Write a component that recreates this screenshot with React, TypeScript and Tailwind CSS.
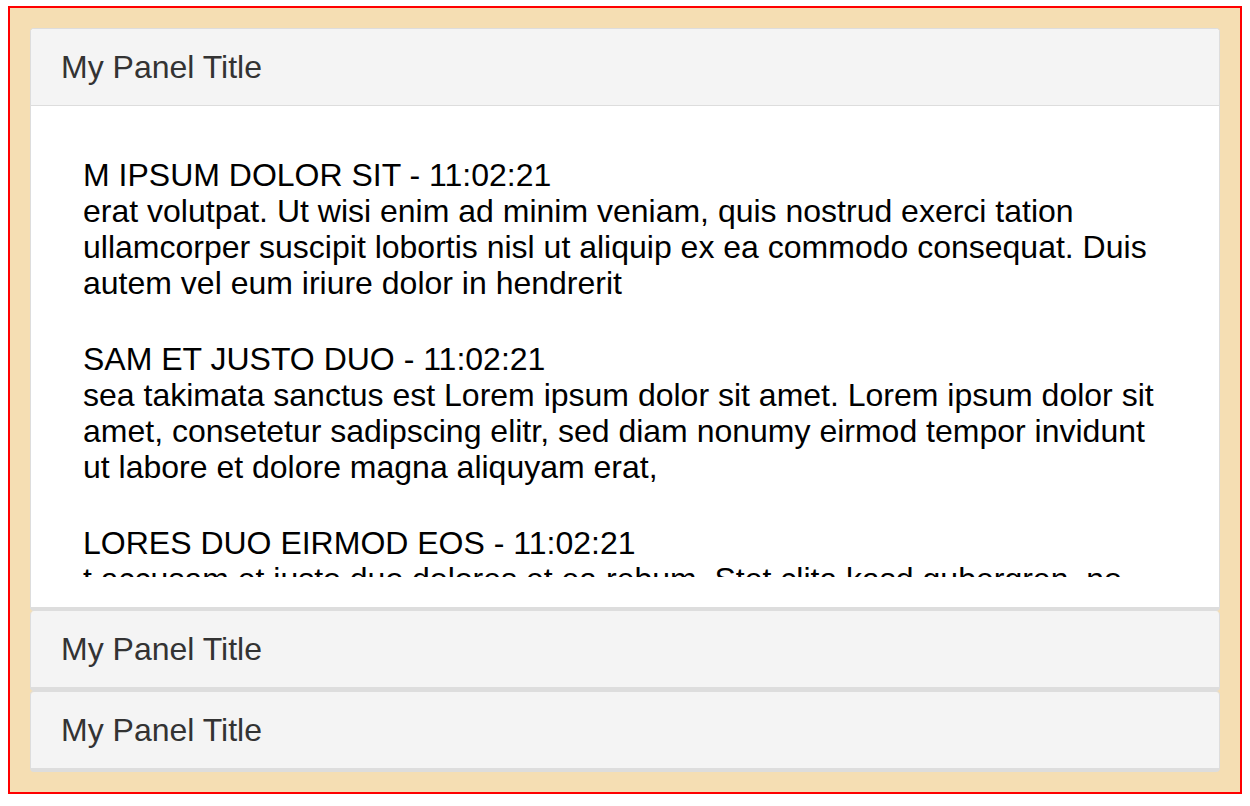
const entries = [
  {
    title: 'M IPSUM DOLOR SIT - 11:02:21',
    text: 'erat volutpat. Ut wisi enim ad minim veniam, quis nostrud exerci tation ullamcorper suscipit lobortis nisl ut aliquip ex ea commodo consequat. Duis autem vel eum iriure dolor in hendrerit',
  },
  {
    title: 'SAM ET JUSTO DUO - 11:02:21',
    text: 'sea takimata sanctus est Lorem ipsum dolor sit amet. Lorem ipsum dolor sit amet, consetetur sadipscing elitr, sed diam nonumy eirmod tempor invidunt ut labore et dolore magna aliquyam erat,',
  },
  {
    title: 'LORES DUO EIRMOD EOS - 11:02:21',
    text: 't accusam et justo duo dolores et ea rebum. Stet clita kasd gubergren, no sea takimata sanctus est Lorem ipsum dolor sit amet. Lorem ipsum dolor sit amet, consetetur sadipscing elitr.',
  },
  {
    title: 'STET CLITA KASD - 11:02:21',
    text: 'sed diam voluptua. At vero eos et accusam et justo duo dolores et ea rebum.',
  },
]

function PanelHeader() {
  return (
    <div className="bg-[#f4f4f4] px-[30px] py-5 text-[32px] leading-9 text-[#333]">
      My Panel Title
    </div>
  )
}

export default function App() {
  return (
    <div className="font-['Liberation_Sans',Arial,sans-serif]">
      <div className="ml-2 mt-[6px] w-[1234px] border-2 border-[#ff0000] bg-[#f5deb3] p-5">
        {/* Open panel */}
        <div className="overflow-hidden rounded-[4px] border border-b-4 border-[#ddd] bg-white">
          <div className="border-b border-[#ddd]">
            <PanelHeader />
          </div>
          <div className="p-[30px]">
            <div className="h-[441px] overflow-hidden pl-[22px] pr-[22px] pt-[21px]">
              <div className="flex flex-col gap-10 text-[32px] leading-9 text-black">
                {entries.map((entry) => (
                  <div key={entry.title}>
                    <div>{entry.title}</div>
                    <div>{entry.text}</div>
                  </div>
                ))}
              </div>
            </div>
          </div>
        </div>

        {/* Collapsed panels */}
        <div className="overflow-hidden rounded-[4px] border border-t-0 border-b-4 border-[#ddd]">
          <PanelHeader />
        </div>
        <div className="overflow-hidden rounded-[4px] border border-b-4 border-[#ddd]">
          <PanelHeader />
        </div>
      </div>
    </div>
  )
}
